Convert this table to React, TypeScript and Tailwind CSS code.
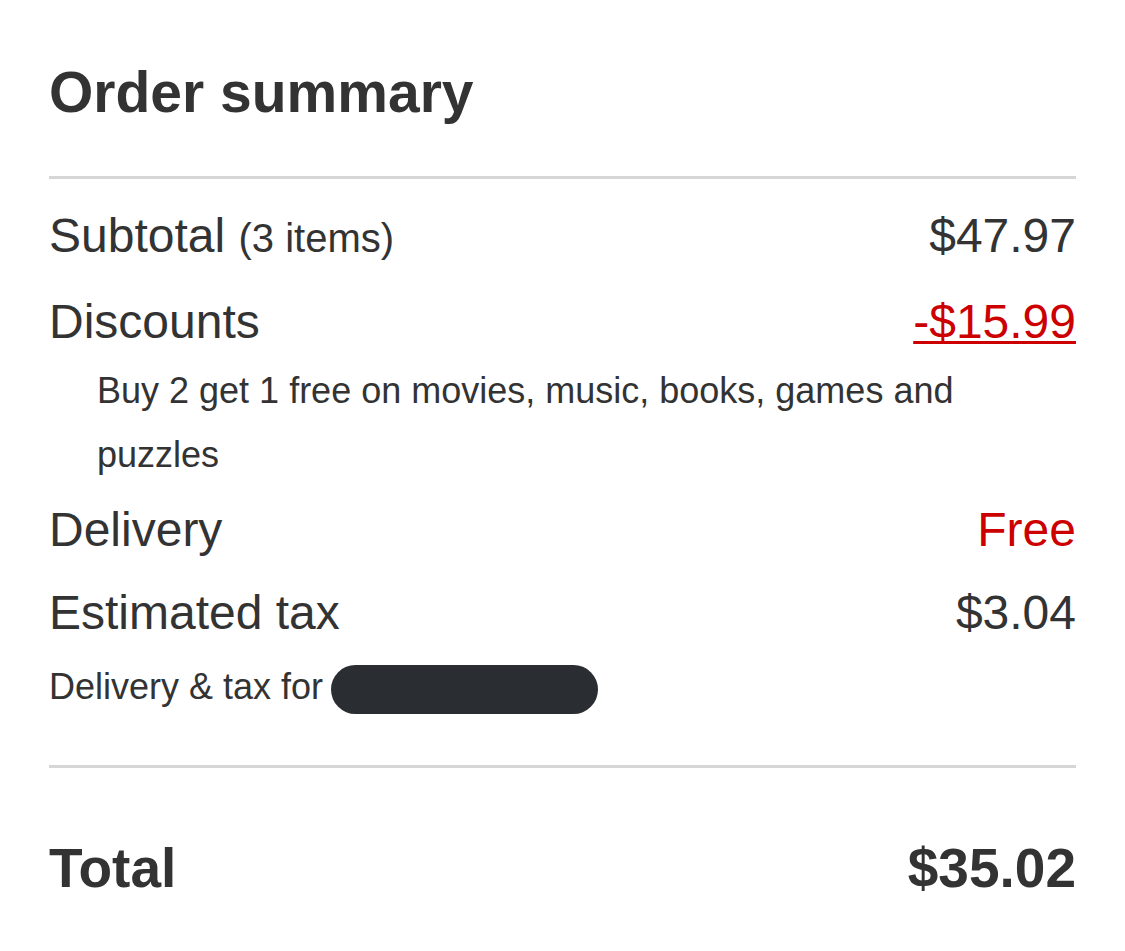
import React from 'react';

const Row = ({ label, value, className = '' }: { label: React.ReactNode; value: React.ReactNode; className?: string }) => (
  <div className={`flex items-baseline justify-between text-[48px] leading-[83px] ${className}`}>
    <span>{label}</span>
    <span>{value}</span>
  </div>
);

export default function App() {
  return (
    <div className="min-h-[951px] w-[1125px] bg-white px-[49px] pt-[64px] text-[#333333] font-['Liberation_Sans',Arial,sans-serif]">
      <h1 className="text-[57px] font-bold leading-none">Order summary</h1>
      <div className="mt-[55px] h-[3px] bg-[#d6d6d6]" />

      <div className="mt-[15px]">
        <Row
          label={
            <>
              Subtotal <span className="text-[40px]">(3 items)</span>
            </>
          }
          value="$47.97"
        />
        <Row
          label="Discounts"
          value={
            <span className="text-[#cc0000] underline decoration-[3px] underline-offset-[3px]">-$15.99</span>
          }
        />
        <p className="-mt-[4px] ml-[48px] text-[36px] leading-[64px]">
          Buy 2 get 1 free on movies, music, books, games and puzzles
        </p>
        <Row label="Delivery" value={<span className="text-[#cc0000]">Free</span>} className="mt-px" />
        <Row label="Estimated tax" value="$3.04" />
        <div className="mt-[8px] flex items-start">
          <span className="text-[36px] leading-[49px]">Delivery &amp; tax for</span>
          <span className="ml-[8px] mt-[3px] h-[49px] w-[267px] rounded-full bg-[#2a2e33]" />
        </div>
      </div>

      <div className="mt-[51px] h-[3px] bg-[#d6d6d6]" />

      <div className="mt-[73px] flex items-baseline justify-between text-[55px] font-bold leading-none">
        <span>Total</span>
        <span>$35.02</span>
      </div>
    </div>
  );
}
